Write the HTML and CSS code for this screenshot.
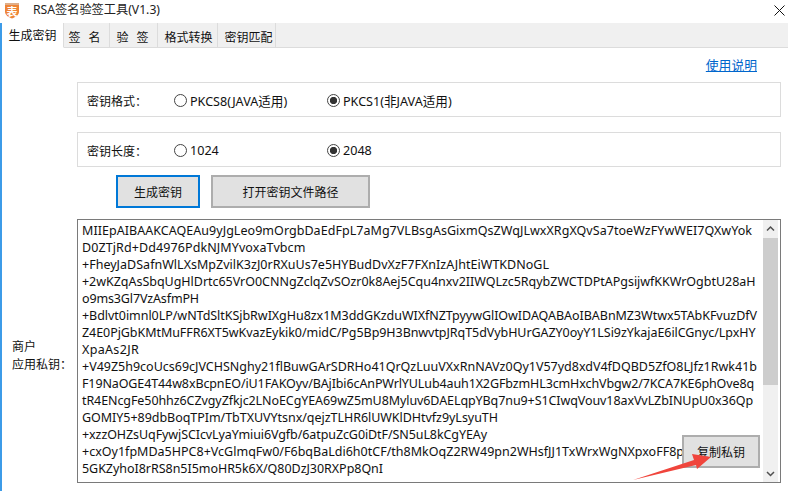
FILE: index.html
```html
<!DOCTYPE html>
<html lang="zh-CN">
<head>
<meta charset="utf-8">
<title>RSA签名验签工具(V1.3)</title>
<link rel="stylesheet" href="styles.css">
</head>
<body>
<div class="window">
  <header class="titlebar">
    <svg class="logo" width="16" height="17" viewBox="0 0 16 17"><path d="M1 1h14v9c0 3-3.500 5.200-7 6.500C4.500 15.200 1 13 1 10z" fill="#ee8436"/><path d="M1 1h14v2H1z" fill="#dfae8a"/><text x="8" y="13.500" text-anchor="middle" class="logo-text">表</text></svg>
    <span class="title">RSA签名验签工具(V1.3)</span>
    <svg class="close" width="11" height="11" viewBox="0 0 11 11"><path d="M.5.5l10 10M10.500.5l-10 10" stroke="#111" stroke-width="1" fill="none"/></svg>
  </header>
  <div class="body">
    <nav class="tabs">
      <span class="tab tab-active">生成密钥</span>
      <span class="tab tab-w46">签&nbsp;&nbsp;&nbsp;名</span>
      <span class="tab tab-w48">验&nbsp;&nbsp;&nbsp;签</span>
      <span class="tab tab-w60">格式转换</span>
      <span class="tab tab-w58">密钥匹配</span>
    </nav>
    <main class="main">
      <div class="linkrow"><a class="link" href="#">使用说明</a></div>
      <section class="group">
        <span class="group-label">密钥格式<span class="colon">：</span></span>
        <label class="radio radio-a"><i class="dot"></i>PKCS8(JAVA适用)</label>
        <label class="radio"><i class="dot dot-on"></i>PKCS1(非JAVA适用)</label>
      </section>
      <section class="group group-2">
        <span class="group-label">密钥长度<span class="colon">：</span></span>
        <label class="radio radio-a"><i class="dot"></i>1024</label>
        <label class="radio"><i class="dot dot-on"></i>2048</label>
      </section>
      <div class="actions">
        <button class="btn btn-primary">生成密钥</button>
        <button class="btn btn-open">打开密钥文件路径</button>
      </div>
      <div class="keyrow">
        <div class="keylabel">商户<br>应用私钥<span class="colon">：</span></div>
        <div class="keybox">
          <div class="keytext">
            <div class="kl l1">MIIEpAIBAAKCAQEAu9yJgLeo9mOrgbDaEdFpL7aMg7VLBsgAsGixmQsZWqJLwxXRgXQvSa7toeWzFYwWEI7QXwYok</div>
            <div class="kl l2">D0ZTjRd+Dd4976PdkNJMYvoxaTvbcm</div>
            <div class="kl l3">+FheyJaDSafnWlLXsMpZvilK3zJ0rRXuUs7e5HYBudDvXzF7FXnIzAJhtEiWTKDNoGL</div>
            <div class="kl l4">+2wKZqAsSbqUgHlDrtc65VrO0CNNgZclqZvSOzr0k8Aej5Cqu4nxv2IIWQLzc5RqybZWCTDPtAPgsijwfKKWrOgbtU28aH</div>
            <div class="kl l5">o9ms3Gl7VzAsfmPH</div>
            <div class="kl l6">+Bdlvt0imnl0LP/wNTdSltKSjbRwIXgHu8zx1M3ddGKzduWIXfNZTpyywGlIOwIDAQABAoIBABnMZ3Wtwx5TAbKFvuzDfV</div>
            <div class="kl l7">Z4E0PjGbKMtMuFFR6XT5wKvazEykik0/midC/Pg5Bp9H3BnwvtpJRqT5dVybHUrGAZY0oyY1LSi9zYkajaE6ilCGnyc/LpxHY</div>
            <div class="kl l8">XpaAs2JR</div>
            <div class="kl l9">+V49Z5h9coUcs69cJVCHSNghy21flBuwGArSDRHo41QrQzLuuVXxRnNAVz0Qy1V57yd8xdV4fDQBD5ZfO8LJfz1Rwk41b</div>
            <div class="kl l10">F19NaOGE4T44w8xBcpnEO/iU1FAKOyv/BAjIbi6cAnPWrlYULub4auh1X2GFbzmHL3cmHxchVbgw2/7KCA7KE6phOve8q</div>
            <div class="kl l11">tR4ENcgFe50hhz6CZvgyZfkjc2LNoECgYEA69wZ5mU8Myluv6DAELqpYBq7nu9+S1CIwqVouv18axVvLZbINUpU0x36Qp</div>
            <div class="kl l12">GOMIY5+89dbBoqTPIm/TbTXUVYtsnx/qejzTLHR6lUWKlDHtvfz9yLsyuTH</div>
            <div class="kl l13">+xzzOHZsUqFywjSCIcvLyaYmiui6Vgfb/6atpuZcG0iDtF/SN5uL8kCgYEAy</div>
            <div class="kl l14">+cxOy1fpMDa5HPC8+VcGlmqFw0/F6bqBaLdi6h0tCF/th8MkOqZ2RW49pn2WHsfJJ1TxWrxWgNXpxoFF8p</div>
            <div class="kl l15">5GKZyhoI8rRS8n5I5moHR5k6X/Q80DzJ30RXPp8QnI</div>
          </div>
          <div class="scrollbar">
            <svg class="sb-arrow" width="15" height="17" viewBox="0 0 15 17"><path d="M4 10.500l3.500-3.500 3.500 3.500" stroke="#505050" stroke-width="1.500" fill="none"/></svg>
            <div class="sb-thumb"></div>
            <svg class="sb-arrow sb-down" width="15" height="17" viewBox="0 0 15 17"><path d="M4 7l3.500 3.500L11 7" stroke="#505050" stroke-width="1.500" fill="none"/></svg>
          </div>
          <button class="btn btn-copy">复制私钥</button>
          <svg class="arrow" width="82" height="30" viewBox="0 0 82 30"><path d="M1 28L62 8 60 2 79 5 65 17 64 13z" fill="#f0453c"/></svg>
        </div>
      </div>
    </main>
  </div>
</div>
</body>
</html>
```

FILE: styles.css
```css
* { box-sizing: border-box; }
html, body { margin: 0; padding: 0; background: #fff; }
body {
  font-family: "Noto Sans", "Noto Sans CJK SC", sans-serif;
  font-size: 13px;
  color: #111;
}
.window { width: 788px; height: 491px; overflow: hidden; display: flex; flex-direction: column; }
.titlebar { height: 23px; display: flex; align-items: center; padding-left: 4px; flex: none; }
.logo { flex: none; margin-top: -3px; }
.logo-text { font-family: "Noto Sans CJK SC", sans-serif; font-size: 11px; font-weight: 700; fill: #fff; }
.title { margin-left: 13px; margin-top: -3px; font-size: 12.200px; line-height: 20px; color: #222; }
.close { margin-left: auto; margin-right: 3px; margin-top: -3px; }
.body { flex: 1; border-left: 2px solid #3c9be8; display: flex; flex-direction: column; min-height: 0; }
.tabs { height: 25px; flex: none; display: flex; background: #f0f0f0; border-bottom: 1px solid #dcdcdc; }
.tab {
  height: 25px; width: 62px; display: flex; align-items: center; justify-content: center;
  border-right: 1px solid #dcdcdc; font-size: 12px; padding-top: 1px; font-family: "Noto Sans CJK SC", sans-serif;
}
.tab-active { background: #fff; border-bottom: 1px solid #fff; padding-top: 0; padding-bottom: 2px; }
.tab-w46 { width: 46px; padding-right: 4px; }
.tab-w48 { width: 48px; padding-right: 2px; }
.tab-w60 { width: 60px; padding-left: 2px; }
.tab-w58 { width: 58px; padding-left: 4px; }
.main { flex: 1; min-height: 0; padding-left: 75px; }
.linkrow { height: 34px; display: flex; justify-content: flex-end; align-items: flex-start; padding-right: 31px; padding-top: 8px; }
.link { color: #0066cc; font-size: 12.800px; line-height: 18px; font-family: "Noto Sans CJK SC", sans-serif; }
.group {
  width: 704px; height: 35px; border: 1px solid #dcdcdc; display: flex; align-items: center; padding-left: 9px; padding-top: 1px;
}
.group-2 { margin-top: 15px; }
.group-label { width: 87px; font-family: "Noto Sans CJK SC", sans-serif; font-size: 12px; }
.colon { font-family: "Noto Sans CJK TC", sans-serif; }
.radio { display: flex; align-items: center; font-size: 12.600px; }
.radio-a { width: 153px; }
.dot { width: 13px; height: 13px; border-radius: 50%; border: 1px solid #444; margin-right: 3px; display: block; background: #fff; flex: none; }
.dot-on { background: radial-gradient(circle, #333 0 3.400px, #fff 3.900px); }
.actions { display: flex; margin-top: 8px; padding-left: 39px; gap: 11px; }
.btn {
  height: 33px; background: #e1e1e1; border: 2px solid #adadad; font: inherit;
  font-family: "Noto Sans CJK SC", sans-serif; font-size: 12px; color: #111; padding: 0;
}
.btn-primary { width: 84px; border-color: #0078d7; }
.btn-open { width: 159px; }
.keyrow { display: flex; margin-top: 11px; margin-left: -75px; position: relative; }
.keylabel { width: 75px; padding-left: 10px; align-self: center; padding-top: 8px; font-family: "Noto Sans CJK SC", sans-serif; font-size: 12px; line-height: 18px; }
.keybox { position: relative; width: 704px; height: 264px; border: 1px solid #7a7a7a; display: flex; overflow: hidden; }
.keytext {
  flex: 1; min-width: 0; padding: 2px 0 0 4px; overflow: hidden;
  font-family: "Noto Sans", sans-serif; font-size: 12.500px; line-height: 17px; color: #111;
}
.kl { white-space: pre; }
.l1 { letter-spacing: .044px; }
.l2 { letter-spacing: .097px; }
.l3 { letter-spacing: .017px; }
.l4 { letter-spacing: -.028px; }
.l5 { letter-spacing: -.137px; }
.l6 { letter-spacing: -.041px; }
.l7 { letter-spacing: -.061px; }
.l8 { letter-spacing: .332px; }
.l9 { letter-spacing: -.004px; }
.l10 { letter-spacing: -.115px; }
.l11 { letter-spacing: -.086px; }
.l12 { letter-spacing: -.04px; }
.l13 { letter-spacing: -.087px; }
.l14 { letter-spacing: .009px; }
.l15 { letter-spacing: -.039px; }
.scrollbar { width: 15px; margin-right: 2px; background: #f0f0f0; display: flex; flex-direction: column; flex: none; }
.sb-arrow { flex: none; display: block; }
.sb-thumb { height: 147px; background: #cdcdcd; flex: none; margin-top: 1px; }
.sb-down { margin-top: auto; }
.btn-copy { position: absolute; left: 604px; top: 215px; width: 78px; height: 33px; }
.arrow { position: absolute; left: 554px; top: 232px; }
```
